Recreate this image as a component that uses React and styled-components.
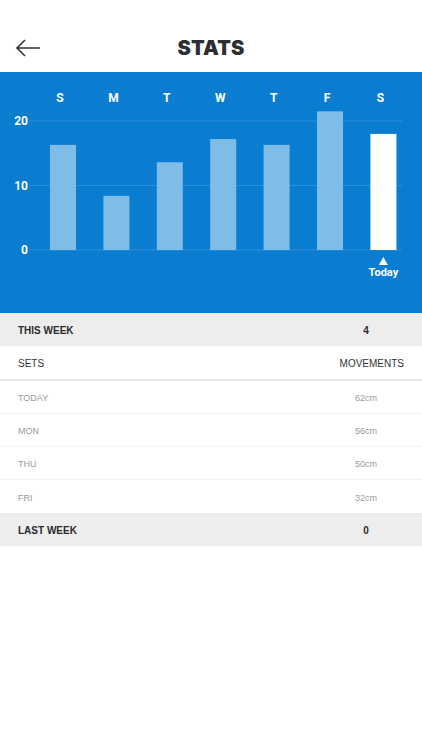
import React from 'react';
import styled, { createGlobalStyle } from 'styled-components';

const GlobalStyle = createGlobalStyle`
    body {
        margin: 0;
        background: #fff;
        font-family: "Liberation Sans", Arial, sans-serif;
    }
`

const days = [
    { label: 'S', value: 16.3 },
    { label: 'M', value: 8.4 },
    { label: 'T', value: 13.6 },
    { label: 'W', value: 17.2 },
    { label: 'T', value: 16.3 },
    { label: 'F', value: 21.5 },
    { label: 'S', value: 18.0, today: true },
]

const rows = [
    { day: 'TODAY', value: '62cm' },
    { day: 'MON', value: '56cm' },
    { day: 'THU', value: '50cm' },
    { day: 'FRI', value: '32cm' },
]

const BASE = 178
const UNIT = 6.45

const Chart = () => (
    <svg width="422" height="241" viewBox="0 0 422 241">
        {[20, 10, 0].map(v => (
            <g key={v}>
                <line x1="30" x2="402" y1={BASE - v * UNIT} y2={BASE - v * UNIT} stroke="#2b91da" strokeWidth="1" />
                <text x="28" y={BASE - v * UNIT + 4} textAnchor="end" fill="#fff" fontSize="12" fontWeight="700" fontFamily="Roboto, sans-serif">{v}</text>
            </g>
        ))}
        {days.map((d, i) => {
            const x = 50 + i * 53.4
            const h = d.value * UNIT
            return (
                <g key={i}>
                    <text x={x + 10} y="29.5" textAnchor="middle" fill="#fff" fontSize="12" fontWeight="700" fontFamily="Roboto, sans-serif">{d.label}</text>
                    <rect x={x} y={BASE - h} width="26" height={h} fill={d.today ? '#ffffff' : '#7fbde9'} />
                    {d.today && (
                        <g>
                            <polygon points={`${x + 13},185 ${x + 17.5},193 ${x + 8.5},193`} fill="#fff" />
                            <text x={x + 13} y="204" textAnchor="middle" fill="#fff" fontSize="11" fontWeight="700" fontFamily="Roboto, sans-serif">Today</text>
                        </g>
                    )}
                </g>
            )
        })}
    </svg>
)

const Stats = () => {
    return (
        <Page>
            <GlobalStyle />
            <Header>
                <BackButton>
                    <svg width="26" height="18" viewBox="0 0 26 18">
                        <path d="M25 9H2M10 1L2 9l8 8" fill="none" stroke="#333" strokeWidth="1.6" />
                    </svg>
                </BackButton>
                <Title>STATS</Title>
            </Header>
            <ChartPanel>
                <Chart />
            </ChartPanel>
            <SummaryRow>
                <SummaryLabel>THIS WEEK</SummaryLabel>
                <ValueCell bold>4</ValueCell>
            </SummaryRow>
            <HeadRow>
                <HeadLabel>SETS</HeadLabel>
                <HeadLabel>MOVEMENTS</HeadLabel>
            </HeadRow>
            {rows.map(r => (
                <DataRow key={r.day}>
                    <DataLabel>{r.day}</DataLabel>
                    <ValueCell>{r.value}</ValueCell>
                </DataRow>
            ))}
            <SummaryRow>
                <SummaryLabel>LAST WEEK</SummaryLabel>
                <ValueCell bold>0</ValueCell>
            </SummaryRow>
        </Page>
    )
}

const Page = styled.div`
    width: 422px;
    min-height: 750px;
    background: #fff;
`

const Header = styled.div`
    height: 72px;
    display: flex;
    align-items: center;
    justify-content: center;
    position: relative;
    padding-top: 24px;
    box-sizing: border-box;
`

const BackButton = styled.div`
    position: absolute;
    left: 15px;
    top: 39px;
    display: flex;
`

const Title = styled.h1`
    margin: 0;
    font-family: Inter, "Noto Sans", sans-serif;
    font-weight: 900;
    font-size: 20px;
    letter-spacing: 0.1px;
    color: #2b2f33;
`

const ChartPanel = styled.div`
    height: 241px;
    background: #0a7dd0;
    display: flex;
`

const Row = styled.div`
    display: flex;
    align-items: center;
    justify-content: space-between;
    padding: 2px 18px 0;
    box-sizing: border-box;
`

const SummaryRow = styled(Row)`
    height: 33px;
    background: #ededed;
`

const HeadRow = styled(Row)`
    height: 35px;
    border-bottom: 2px solid #e8e8e8;
`

const DataRow = styled(Row)`
    height: 33px;
    border-bottom: 1px solid #f1f1f1;
    &:nth-last-of-type(2) {
        border-bottom: none;
    }
`

const SummaryLabel = styled.span`
    font-size: 10px;
    font-weight: 700;
    color: #2a2a2a;
`

const HeadLabel = styled.span`
    font-size: 10px;
    color: #333;
`

const DataLabel = styled.span`
    font-size: 9px;
    color: #9a9a9a;
`

const ValueCell = styled.span`
    width: 60px;
    margin-right: 8px;
    text-align: center;
    font-size: ${p => (p.bold ? '10px' : '9px')};
    font-weight: ${p => (p.bold ? 700 : 400)};
    color: ${p => (p.bold ? '#2a2a2a' : '#9a9a9a')};
`

export default Stats;
